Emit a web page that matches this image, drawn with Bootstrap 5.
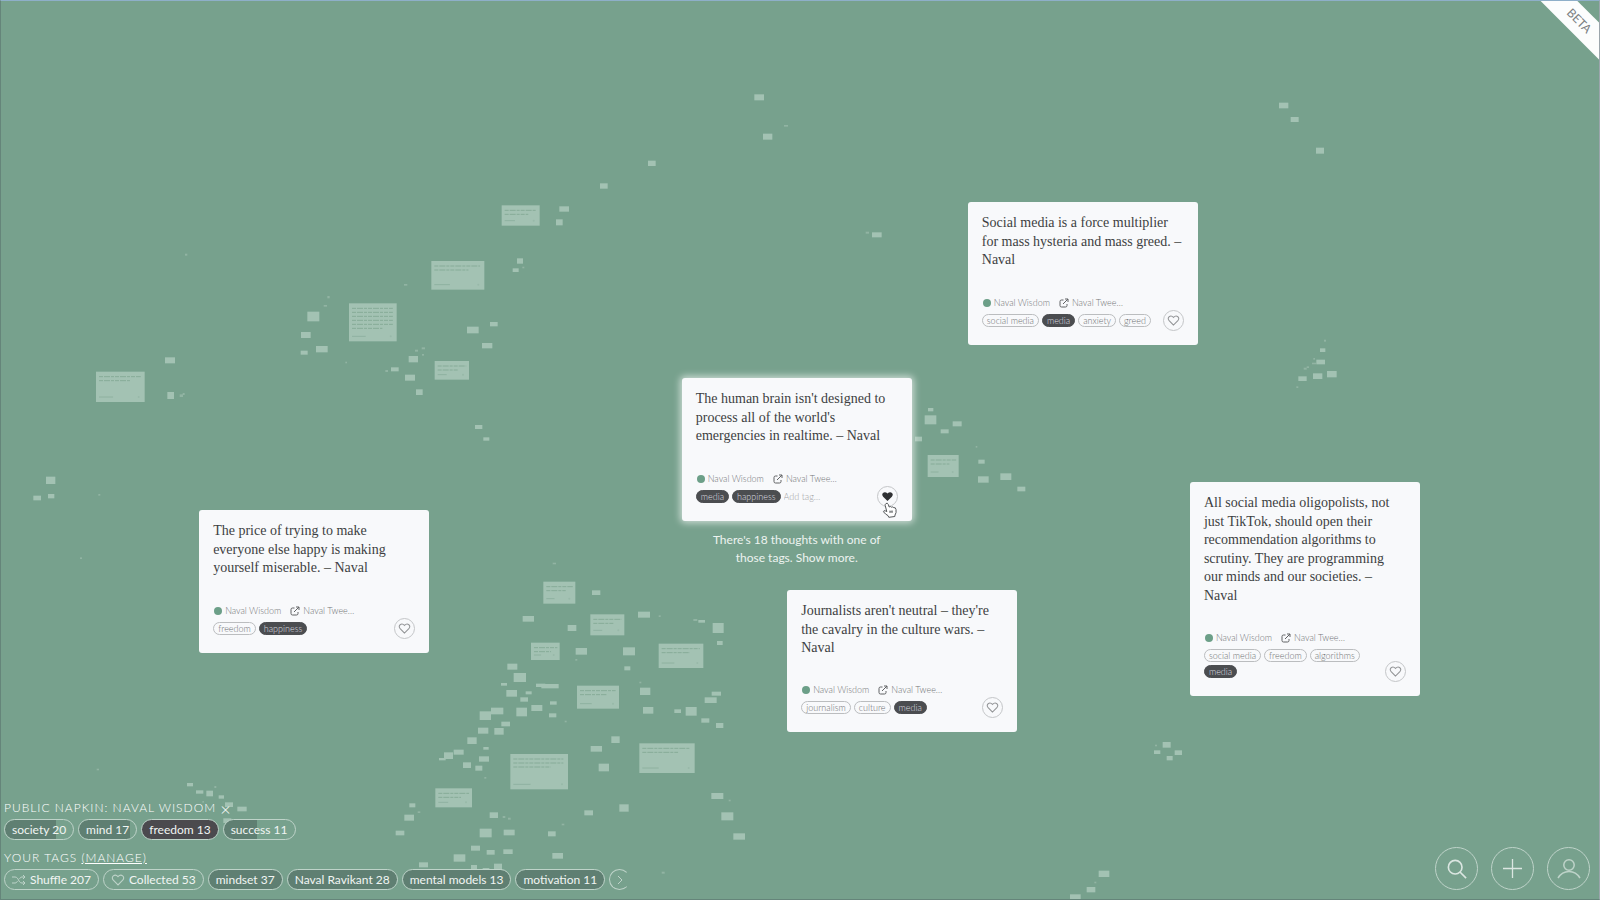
<!DOCTYPE html>
<html lang="en">
<head>
<meta charset="utf-8">
<meta name="viewport" content="width=device-width, initial-scale=1">
<title>Napkin</title>
<link href="https://cdn.jsdelivr.net/npm/bootstrap@5.3.0/dist/css/bootstrap.min.css" rel="stylesheet">
<style>
  :root { --felt: #77a18d; --paper: #f8f9fb; --ink: #4b4d50; --chalk: #edf3f0; --pale: #bed3c9; }
  body { font-family: Lato, "Open Sans", sans-serif; background: var(--felt); }
  .space { background: var(--felt); border: 1px solid #65857a; border-top-color: #8eafc9; border-right-color: #9ba5ac; min-height: 100vh; }
  .stars { fill: #a3c2b3; }
  .scribble { stroke: #86ab98; stroke-width: 1; fill: none; }
  .thought { width: 230px; }
  .thought .card { --bs-card-bg: var(--paper); --bs-card-border-width: 0; --bs-card-border-radius: 3px; --bs-card-inner-border-radius: 3px; padding: 12px 14px 18px; }
  .focused .card { box-shadow: 0 0 7px 2px #ffffffa0; }
  .quote { font: 14px/1.32 "Liberation Serif", serif; color: #3d3f42; margin-bottom: 25px; white-space: nowrap; }
  .source { font-size: 9px; line-height: 16px; font-weight: 300; margin-bottom: 3px; gap: 3px; }
  .source a, .add-tag { color: #747678; text-decoration: none; }
  .dot { width: 8px; height: 8px; background: #6c9f88; margin-left: 1px; }
  .ext { width: 10px; height: 10px; margin-left: 6px; }
  .chips { gap: 3px; width: 170px; }
  .chip { font-size: 9px; line-height: 11px; font-weight: 300; height: 13px; padding: 0 4px; border: 1px solid #bbbdbf; border-radius: 7px; color: #6f7173; background: none; white-space: nowrap; }
  .chip.on { background: #4b4d50; border-color: #4b4d50; color: #dedfe0; }
  .add-tag { font-size: 9px; font-weight: 300; line-height: 13px; height: 13px; width: 50px; border: 0; padding: 0; background: none; }
  .add-tag::placeholder { color: #a0a2a4; }
  .like { right: 14px; bottom: 14px; width: 21px; height: 21px; padding: 0; border: 1px solid #c4c6c8; border-radius: 50%; background: none; }
  .pointer { right: 13px; bottom: 2px; width: 17px; height: 17px; }
  .more { font-size: 12px; line-height: 18px; color: var(--chalk); text-align: center; padding-top: 10px; }
  .more a { color: inherit; text-decoration: none; }
  .head { font-size: 12px; font-weight: 300; line-height: 16px; letter-spacing: 1px; color: #fff; margin: 0; }
  .head a, .head button { color: inherit; letter-spacing: inherit; border: 0; background: none; padding: 0; }
  .head button { font-size: 18px; line-height: 12px; font-weight: 300; vertical-align: middle; }
  .tagbar { gap: 4px; padding-top: 3px; }
  .napkin { margin-bottom: 10px; }
  .tagbtn { font-size: 12px; line-height: 19px; height: 21px; padding: 0 7px; border: 1px solid var(--pale); border-radius: 11px; color: #f1f5f3; white-space: nowrap;
    background: linear-gradient(90deg, #5f7f72 var(--fill, 0%), transparent var(--fill, 0%)); }
  .tagbtn.on { background: #4b4a4e; }
  .next { width: 21px; padding: 0; border-right-color: transparent; }
  .tools { gap: 13px; }
  .round { width: 43px; height: 43px; padding: 0; border: 1px solid var(--pale); border-radius: 50%; background: none; }
  .round svg, .tagbtn svg { fill: none; stroke: var(--pale); }
  .ribbon { width: 90px; height: 26px; right: -25px; top: 7px; transform: rotate(45deg); background: #fcfdfd; color: #7b7f81; font-size: 12px; line-height: 26px; text-align: center; }
</style>
</head>
<body>
<svg width="0" height="0" class="position-absolute" aria-hidden="true">
  <symbol id="heart" viewBox="0 0 20 20"><path d="M10 17 L3.3 10.2 C-1 5.5 5.5 0.5 10 5.2 C14.5 0.5 21 5.5 16.7 10.2 Z"/></symbol>
  <symbol id="out" viewBox="0 0 20 20"><path d="M9 4H5Q2 4 2 7V15Q2 18 5 18H13Q16 18 16 15V12M8 12L18 2M12 2H18V8" fill="none" stroke="#606264" stroke-width="2"/></symbol>
</svg>
<main class="space position-relative overflow-hidden d-flex flex-column">
  <svg class="stars position-absolute top-0 start-0 w-100 h-100" id="stars" aria-hidden="true"></svg>

  <article class="thought position-absolute" style="left:60.5%;top:22.4%"><div class="card">
    <p class="quote">Social media is a force multiplier<br>for mass hysteria and mass greed. –<br>Naval</p>
    <div class="source d-flex align-items-center"><i class="dot rounded-circle"></i><a href="#">Naval Wisdom</a><svg class="ext"><use href="#out"/></svg><a href="#">Naval Twee…</a></div>
    <div class="chips d-flex flex-wrap"><button class="chip">social media</button><button class="chip on">media</button><button class="chip">anxiety</button><button class="chip">greed</button></div>
    <button class="like position-absolute d-flex align-items-center justify-content-center" aria-label="Collect"><svg width="13" height="13" fill="none" stroke="#939597" stroke-width="1.7"><use href="#heart"/></svg></button>
  </div></article>

  <article class="thought focused position-absolute" style="left:42.6%;top:42%"><div class="card">
    <p class="quote">The human brain isn't designed to<br>process all of the world's<br>emergencies in realtime. – Naval</p>
    <div class="source d-flex align-items-center"><i class="dot rounded-circle"></i><a href="#">Naval Wisdom</a><svg class="ext"><use href="#out"/></svg><a href="#">Naval Twee…</a></div>
    <div class="chips d-flex flex-wrap"><button class="chip on">media</button><button class="chip on">happiness</button><input class="add-tag" type="text" placeholder="Add tag…" aria-label="Add tag"></div>
    <button class="like position-absolute d-flex align-items-center justify-content-center" aria-label="Collected"><svg width="13" height="13" fill="#2f3133"><use href="#heart"/></svg></button>
    <svg class="pointer position-absolute" viewBox="0 0 17 17" aria-hidden="true"><path d="M4 1.5Q5.5 .5 6.3 2.5L7.2 5Q8.5 4 9.5 5.2Q11 4.3 11.8 5.7Q13.6 5 14 7.5Q14.6 11 13 13L12.8 14.5L6.8 15.3L6 13.6Q3.5 12.5 1.5 9.8Q1.5 8 3.6 9L4.8 9.6L3.2 3.5Q3 2 4 1.5Z" fill="#fff" stroke="#55585a"/><path d="M8 8.5V11M10 8.3V11M7.5 9.8H10.8" stroke="#77797b" fill="none"/></svg>
  </div>
  <p class="more mb-0">There's 18 thoughts with one of<br>those tags. <a href="#">Show more.</a></p></article>

  <article class="thought position-absolute" style="left:12.4%;top:56.7%"><div class="card">
    <p class="quote">The price of trying to make<br>everyone else happy is making<br>yourself miserable. – Naval</p>
    <div class="source d-flex align-items-center"><i class="dot rounded-circle"></i><a href="#">Naval Wisdom</a><svg class="ext"><use href="#out"/></svg><a href="#">Naval Twee…</a></div>
    <div class="chips d-flex flex-wrap"><button class="chip">freedom</button><button class="chip on">happiness</button></div>
    <button class="like position-absolute d-flex align-items-center justify-content-center" aria-label="Collect"><svg width="13" height="13" fill="none" stroke="#939597" stroke-width="1.7"><use href="#heart"/></svg></button>
  </div></article>

  <article class="thought position-absolute" style="left:49.2%;top:65.6%"><div class="card">
    <p class="quote">Journalists aren't neutral – they're<br>the cavalry in the culture wars. –<br>Naval</p>
    <div class="source d-flex align-items-center"><i class="dot rounded-circle"></i><a href="#">Naval Wisdom</a><svg class="ext"><use href="#out"/></svg><a href="#">Naval Twee…</a></div>
    <div class="chips d-flex flex-wrap"><button class="chip">journalism</button><button class="chip">culture</button><button class="chip on">media</button></div>
    <button class="like position-absolute d-flex align-items-center justify-content-center" aria-label="Collect"><svg width="13" height="13" fill="none" stroke="#939597" stroke-width="1.7"><use href="#heart"/></svg></button>
  </div></article>

  <article class="thought position-absolute" style="left:74.4%;top:53.6%"><div class="card">
    <p class="quote">All social media oligopolists, not<br>just TikTok, should open their<br>recommendation algorithms to<br>scrutiny. They are programming<br>our minds and our societies. –<br>Naval</p>
    <div class="source d-flex align-items-center"><i class="dot rounded-circle"></i><a href="#">Naval Wisdom</a><svg class="ext"><use href="#out"/></svg><a href="#">Naval Twee…</a></div>
    <div class="chips d-flex flex-wrap"><button class="chip">social media</button><button class="chip">freedom</button><button class="chip">algorithms</button><button class="chip on">media</button></div>
    <button class="like position-absolute d-flex align-items-center justify-content-center" aria-label="Collect"><svg width="13" height="13" fill="none" stroke="#939597" stroke-width="1.7"><use href="#heart"/></svg></button>
  </div></article>

  <div class="position-absolute top-0 end-0 overflow-hidden" style="width:70px;height:70px"><div class="ribbon position-absolute">BETA</div></div>

  <footer class="mt-auto d-flex justify-content-between align-items-end position-relative" style="padding:0 9px 9px 3px">
    <div>
      <h2 class="head">PUBLIC NAPKIN: NAVAL WISDOM <button aria-label="Close napkin">×</button></h2>
      <div class="tagbar napkin d-flex">
        <button class="tagbtn" style="--fill:75%">society 20</button><button class="tagbtn" style="--fill:90%">mind 17</button><button class="tagbtn on">freedom 13</button><button class="tagbtn" style="--fill:46%">success 11</button>
      </div>
      <h2 class="head">YOUR TAGS <a href="#" class="text-decoration-underline">(MANAGE)</a></h2>
      <div class="tagbar d-flex">
        <button class="tagbtn d-flex align-items-center gap-1"><svg width="14" height="12" viewBox="0 0 14 12"><path d="M0 3H3C7 3 6 9 10 9H13M0 9H3C4.5 9 5 8 5.5 7M7.500 5C8 4 8.500 3 10 3H13M11 1L13 3L11 5M11 7L13 9L11 11"/></svg>Shuffle 207</button><button class="tagbtn d-flex align-items-center gap-1"><svg width="14" height="14" stroke-width="1.6"><use href="#heart"/></svg>Collected 53</button><button class="tagbtn" style="--fill:100%">mindset 37</button><button class="tagbtn" style="--fill:100%">Naval Ravikant 28</button><button class="tagbtn" style="--fill:100%">mental models 13</button><button class="tagbtn" style="--fill:100%">motivation 11</button><button class="tagbtn next d-flex align-items-center justify-content-center" aria-label="More tags"><svg width="6" height="10"><path d="M1 1L5 5L1 9"/></svg></button>
      </div>
    </div>
    <nav class="tools d-flex" aria-label="Tools">
      <button class="round d-flex align-items-center justify-content-center" aria-label="Search"><svg width="20" height="20" viewBox="0 0 22 22" stroke-width="1.8" style="stroke:#dbe6e1"><circle cx="9" cy="9" r="7.500"/><path d="M14 14L21 21"/></svg></button>
      <button class="round d-flex align-items-center justify-content-center" aria-label="Add"><svg width="19" height="19" stroke-width="1.3" style="stroke:#dbe6e1"><path d="M9.500 0V19M0 9.500H19"/></svg></button>
      <button class="round d-flex align-items-center justify-content-center" aria-label="Account"><svg width="26" height="22" stroke-width="1.5"><circle cx="13" cy="7" r="5.200"/><path d="M2 20Q6 13.500 13 13.500T24 20"/></svg></button>
    </nav>
  </footer>
</main>
<script>
/* Distant thoughts: each cluster has an origin and nodes [x, y, w, h] in thirds of a pixel */
const clusters = [
 [380,540,[[490,125,96,66],[631,223,102,63],[453,308,86,52],[836,311,134,73],[591,437,126,69],[391,642,173,106],[778,610,166,89],[166,745,110,57],
  [518,68,10,5],[636,151,25,14],[428,228,34,17],[563,255,26,18],[774,215,36,18],[836,226,6,5],[940,237,12,6],[955,240,20,8],[998,249,33,30],[1011,303,17,12],
  [587,324,34,20],[586,357,6,5],[729,322,36,24],[733,379,18,12],[382,371,30,18],[401,399,37,27],[363,429,18,8],[379,450,32,20],[468,431,28,10],[484,432,52,13],[437,454,18,9],[421,472,23,13],
  [409,503,32,26],[454,495,33,18],[510,484,20,10],[507,520,22,12],[299,514,34,26],[333,503,37,20],[364,545,26,14],[294,563,31,18],[343,564,28,20],[262,592,28,20],[310,621,16,8],
  [192,637,27,20],[221,629,30,15],[177,654,20,7],[249,667,24,17],[297,649,30,16],[286,677,21,15],[313,711,6,5],[554,542,6,5],[778,425,6,5],[780,443,31,22],[789,501,31,20],[883,508,20,11],
  [917,501,33,26],[974,472,36,17],[995,455,28,12],[964,535,24,13],[1008,549,22,15],[694,589,25,20],[632,618,34,17],[656,671,31,23],[994,759,36,18],[1046,779,6,5],[1024,817,36,24],[1060,880,35,19],
  [718,793,28,22],[613,811,26,15],[545,851,8,5],[504,874,23,15],[517,939,32,17],[88,790,18,12],[113,814,8,5],[73,824,29,18],[47,872,26,14],[329,817,25,17],[368,828,8,6],[384,833,8,6],
  [299,866,36,26],[371,869,33,17],[273,917,27,15],[320,930,24,14],[370,928,28,14],[221,943,35,22],[117,967,27,15],[342,971,24,20],[273,975,18,12],[308,984,20,8],[845,995,9,6]]],
 [280,80,[[665,376,114,61],[454,543,159,86],[207,670,143,114],[464,843,103,56],[838,379,29,16],[828,418,20,18],[711,535,18,16],[698,565,18,11],[727,560,6,5],[372,612,10,5],
  [142,648,7,7],[131,675,10,5],[82,695,36,29],[63,756,29,18],[62,812,21,12],[108,798,35,19],[386,828,28,19],[333,862,23,12],[316,870,8,6],[375,884,30,18],[408,928,20,17],[405,809,9,6],[425,802,10,6],
  [426,822,6,5],[561,740,35,20],[630,726,23,13],[606,789,31,16],[585,1035,22,12],[610,1072,18,10],[196,845,5,5]]],
 [0,340,[[288,95,146,91],[495,52,30,18],[502,156,20,21],[539,163,10,8],[548,159,6,6],[138,410,28,22],[100,467,23,14],[144,462,19,13],[295,462,6,5]]],
 [560,70,[[583,73,29,18],[609,191,28,18],[672,165,12,5],[264,272,23,16],[120,340,23,16],[917,485,10,6],[936,487,29,15]]],
 [660,360,[[803,285,93,66],[804,144,16,10],[794,166,35,27],[878,184,27,15],[842,208,24,12],[765,230,21,14],[947,258,5,5],[955,299,19,12],[954,349,32,19],[1021,340,33,20],[1072,380,24,14]]],
 [950,190,[[1122,449,6,6],[1110,475,16,11],[1099,509,26,14],[1086,518,12,5],[1090,504,5,5],[1061,533,9,6],[1070,529,7,5],[1045,559,25,14],[1089,550,28,17],[1131,543,29,19],[1039,589,6,5]]],
 [180,780,[[21,9,18,10],[48,31,22,10],[79,32,20,17],[103,18,6,6],[116,46,16,10],[67,63,5,5],[135,67,24,14],[172,80,28,14],[130,115,24,14]]],
 [1270,90,[[27,38,28,17],[62,81,24,15],[138,173,24,18]]],
 [1050,730,[[338,36,24,17],[312,61,19,11],[350,78,18,13],[374,61,22,14],[315,44,6,5],[146,422,32,19],[110,471,26,16],[60,493,32,18],[133,455,6,5]]],
 [80,240,[[315,41,7,6],[0,952,6,5],[50,1586,7,5]]]
];
const svg = document.getElementById('stars'), ns = svg.namespaceURI;
const pctX = v => (v - 1) / 15.98 + '%', pctY = v => (v - 1) / 8.98 + '%';
function add(tag, attrs) {
  const el = document.createElementNS(ns, tag);
  for (const k in attrs) el.setAttribute(k, attrs[k]);
  svg.append(el);
}
for (const [ox, oy, nodes] of clusters) for (const [x, y, w, h] of nodes) {
  const X = ox + x / 3, Y = oy + y / 3, W = w / 3, H = h / 3;
  add('rect', { x: pctX(X), y: pctY(Y), width: W, height: H, opacity: W < 5 ? .6 : 1 });
  if (W > 25) {
    const rows = H > 36 ? 6 : H > 33 ? 3 : 2;
    for (let i = 0; i < rows; i++)
      add('line', { class: 'scribble', 'stroke-dasharray': '4 1 6 1 3 1', x1: pctX(X + 3), x2: pctX(X + W * (i === rows - 1 ? .7 : .92)), y1: pctY(Y + 5 + i * 4), y2: pctY(Y + 5 + i * 4) });
    add('line', { class: 'scribble', opacity: .7, x1: pctX(X + 3), x2: pctX(X + W * .35), y1: pctY(Y + H - 5), y2: pctY(Y + H - 5) });
    add('circle', { fill: '#98b9a9', cx: pctX(X + W - 6), cy: pctY(Y + H - 5), r: 1 });
  }
}
</script>
<script src="https://cdn.jsdelivr.net/npm/bootstrap@5.3.0/dist/js/bootstrap.bundle.min.js"></script>
</body>
</html>
